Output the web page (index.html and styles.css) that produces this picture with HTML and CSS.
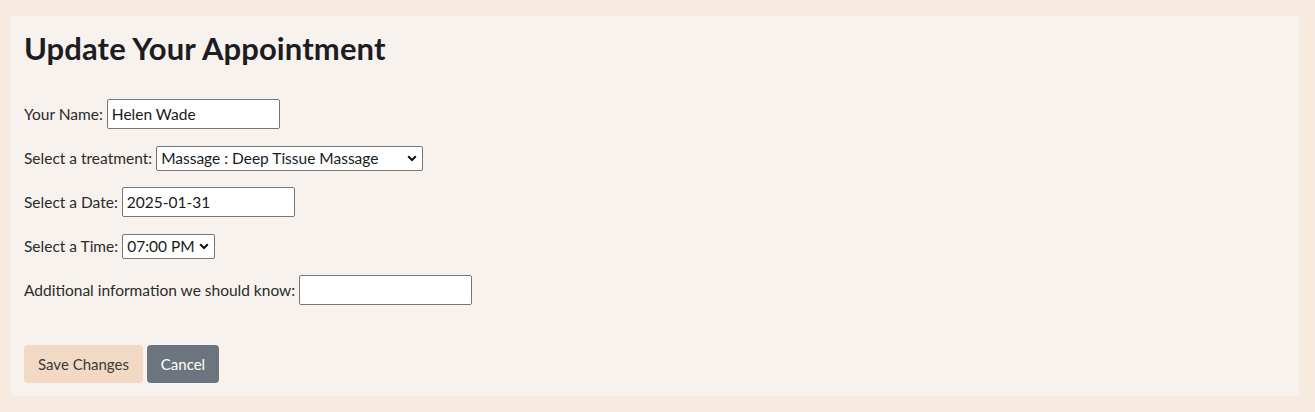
FILE: index.html
```html
<!DOCTYPE html>
<html lang="en">
<head>
<meta charset="utf-8">
<title>Update Your Appointment</title>
<link rel="stylesheet" href="styles.css">
</head>
<body>
<main class="panel">
  <h1 class="title">Update Your Appointment</h1>
  <form class="form">
    <div class="row row-name">
      <label for="name">Your Name:</label>
      <input id="name" class="field" type="text" value="Helen Wade">
    </div>
    <div class="row row-treat">
      <label for="treat">Select a treatment:</label>
      <span class="select treat">
        <span class="select-text">Massage : Deep Tissue Massage</span>
        <svg class="chev" width="10" height="7" viewBox="0 0 10 7"><path d="M1.2 1.3 L5 5 L8.8 1.3" fill="none" stroke="#111" stroke-width="2"/></svg>
      </span>
    </div>
    <div class="row row-date">
      <label for="date">Select a Date:</label>
      <input id="date" class="field" type="text" value="2025-01-31">
    </div>
    <div class="row row-time">
      <label for="time">Select a Time:</label>
      <span class="select time">
        <span class="select-text">07:00 PM</span>
        <svg class="chev" width="10" height="7" viewBox="0 0 10 7"><path d="M1.2 1.3 L5 5 L8.8 1.3" fill="none" stroke="#111" stroke-width="2"/></svg>
      </span>
    </div>
    <div class="row row-info">
      <label for="info">Additional information we should know:</label>
      <input id="info" class="field" type="text" value="">
    </div>
    <div class="actions">
      <button type="button" class="btn btn-save">Save Changes</button>
      <button type="button" class="btn btn-cancel">Cancel</button>
    </div>
  </form>
</main>
</body>
</html>
```
FILE: styles.css
```css
html, body {
  margin: 0;
  padding: 0;
}
body {
  background: #f7eadf;
  padding: 16px 16px 16px 11px;
  font-family: "Lato", "Open Sans", sans-serif;
  color: #212529;
  height: 412px;
  box-sizing: border-box;
}
.panel {
  background: #f7f2ee;
  width: 1288px;
  height: 380px;
  box-sizing: border-box;
  padding: 13px 13px 0 13px;
}
.title {
  margin: 0;
  font-size: 31px;
  font-weight: 700;
  line-height: 38px;
  color: #1c1c22;
  letter-spacing: 0.1px;
}
.form {
  margin-top: 32px;
  display: flex;
  flex-direction: column;
}
.row {
  display: flex;
  align-items: center;
  height: 30px;
  font-size: 15.5px;
  color: #2b2b2b;
}
.row + .row { margin-top: 14px; }
.row label { margin-right: 4px; }
.field {
  box-sizing: border-box;
  width: 173px;
  height: 30px;
  border: 1px solid #767676;
  border-radius: 2px;
  background: #fff;
  font-family: inherit;
  font-size: 15.5px;
  color: #1a1a1a;
  padding: 0 4px;
  outline: none;
}
.select {
  box-sizing: border-box;
  display: inline-flex;
  align-items: center;
  justify-content: space-between;
  height: 25px;
  border: 1px solid #767676;
  border-radius: 2px;
  background: #fff;
  padding: 0 5px 0 4px;
  font-size: 15.5px;
  color: #1a1a1a;
}
.select.treat { width: 267px; }
.select.time { width: 93px; }
.chev { flex: none; }
.actions {
  margin-top: 40px;
  display: flex;
  gap: 4px;
}
.btn {
  height: 38px;
  border: none;
  border-radius: 4px;
  font-family: inherit;
  font-size: 15px;
  padding: 0 13px;
}
.btn-save {
  background: #f1d9c4;
  color: #3a3a3a;
  width: 119px;
}
.btn-cancel {
  background: #6c757d;
  color: #fff;
  width: 72px;
}
```
